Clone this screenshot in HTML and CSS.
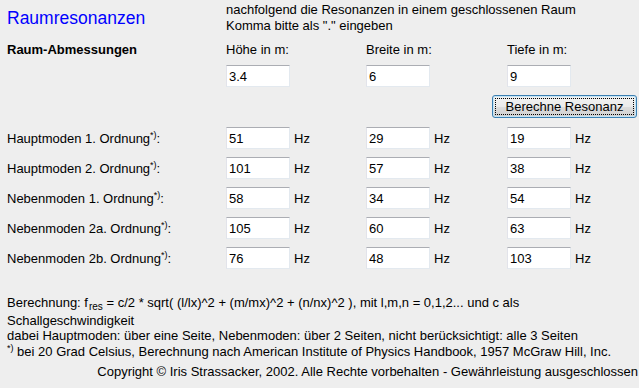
FILE: index.html
```html
<!DOCTYPE html>
<html>
<head>
    <meta charset="UTF-8">
    <title>Raumresonanzen</title>
    <link rel="stylesheet" href="styles.css">
</head>
<body>
    <div class="page">
        <div class="grid head">
            <h1 class="title">Raumresonanzen</h1>
            <p class="intro">nachfolgend die Resonanzen in einem geschlossenen Raum Komma bitte als "." eingeben</p>
        </div>
        <div class="grid labels">
            <b>Raum-Abmessungen</b>
            <span>Höhe in m:</span>
            <span>Breite in m:</span>
            <span>Tiefe in m:</span>
        </div>
        <div class="grid dims">
            <span></span>
            <input type="text" class="field" value="3.4">
            <input type="text" class="field" value="6">
            <input type="text" class="field" value="9">
        </div>
        <div class="action">
            <button class="calc">Berechne Resonanz</button>
        </div>

        <div class="grid result">
            <span>Hauptmoden 1. Ordnung<sup>*)</sup>:</span>
            <span class="cell"><input type="text" class="field" value="51"> Hz</span>
            <span class="cell"><input type="text" class="field" value="29"> Hz</span>
            <span class="cell"><input type="text" class="field" value="19"> Hz</span>
        </div>
        <div class="grid result">
            <span>Hauptmoden 2. Ordnung<sup>*)</sup>:</span>
            <span class="cell"><input type="text" class="field" value="101"> Hz</span>
            <span class="cell"><input type="text" class="field" value="57"> Hz</span>
            <span class="cell"><input type="text" class="field" value="38"> Hz</span>
        </div>
        <div class="grid result">
            <span>Nebenmoden 1. Ordnung<sup>*)</sup>:</span>
            <span class="cell"><input type="text" class="field" value="58"> Hz</span>
            <span class="cell"><input type="text" class="field" value="34"> Hz</span>
            <span class="cell"><input type="text" class="field" value="54"> Hz</span>
        </div>
        <div class="grid result">
            <span>Nebenmoden 2a. Ordnung<sup>*)</sup>:</span>
            <span class="cell"><input type="text" class="field" value="105"> Hz</span>
            <span class="cell"><input type="text" class="field" value="60"> Hz</span>
            <span class="cell"><input type="text" class="field" value="63"> Hz</span>
        </div>
        <div class="grid result">
            <span>Nebenmoden 2b. Ordnung<sup>*)</sup>:</span>
            <span class="cell"><input type="text" class="field" value="76"> Hz</span>
            <span class="cell"><input type="text" class="field" value="48"> Hz</span>
            <span class="cell"><input type="text" class="field" value="103"> Hz</span>
        </div>

        <p class="notes">
            Berechnung: f<sub>res</sub> = c/2 * sqrt( (l/lx)^2 + (m/mx)^2 + (n/nx)^2 ), mit l,m,n = 0,1,2... und c als Schallgeschwindigkeit<br>
            dabei Hauptmoden: über eine Seite, Nebenmoden: über 2 Seiten, nicht berücksichtigt: alle 3 Seiten<br>
            <sup class="mark">*)</sup> bei 20 Grad Celsius, Berechnung nach American Institute of Physics Handbook, 1957 McGraw Hill, Inc.
        </p>
        <p class="copyright">Copyright © Iris Strassacker, 2002. Alle Rechte vorbehalten - Gewährleistung ausgeschlossen</p>
    </div>
</body>
</html>
```

FILE: styles.css
```css
/* old table page, rebuilt with grid */
body {
    font-family: Arial, "Liberation Sans", sans-serif;
    font-size: 13px;
    color: #000;
    background-color: #eeeeee;
    margin: 0;
    padding: 0;
}
.page {
    padding: 2px 0 0 7px;
}
.grid {
    display: grid;
    grid-template-columns: 219px 140px 141px 1fr;
    align-items: center;
}
.head {
    height: 32px;
}
.title {
    margin: 0;
    font-size: 17.5px;
    font-weight: normal;
    color: #0000ff;
}
.intro {
    grid-column: 2 / 5;
    max-width: 372px;
    margin: 0;
    line-height: 16px;
}
.labels {
    height: 31px;
    line-height: 15px;
}
.dims {
    height: 22px;
}
.action {
    display: flex;
    justify-content: flex-end;
    height: 36px;
    padding-right: 2px;
}
.result {
    height: 30px;
}
.cell {
    display: flex;
    align-items: center;
    gap: 4px;
}
sup {
    font-size: 9px;
    line-height: 0;
}
sub {
    font-size: 10px;
    line-height: 12px;
    vertical-align: -3px;
    padding-left: 1px;
}
.notes .mark {
    line-height: normal;
}
.field {
    width: 64px;
    height: 22px;
    box-sizing: border-box;
    margin: 0;
    padding: 0 2px;
    font-family: Arial, "Liberation Sans", sans-serif;
    font-size: 13px;
    color: #000;
    background-color: #fff;
    border: 1px solid #e3e9ef;
    border-top-color: #abadb3;
    border-left-color: #e2e3ea;
    border-radius: 0;
}
.calc {
    margin-top: 8px;
    width: 145px;
    height: 23px;
    padding: 0;
    font-family: Arial, "Liberation Sans", sans-serif;
    font-size: 13px;
    color: #000;
    border: 1px solid #3c7fb1;
    border-radius: 3px;
    background: linear-gradient(#f2f2f2 0%, #ebebeb 50%, #dddddd 51%, #cfcfcf 100%);
    box-shadow: inset 0 0 0 1px #c4e5f6;
    outline: 1px dotted #000;
    outline-offset: -4px;
}
.notes {
    margin: 22px 0 0;
    padding-right: 4px;
    line-height: 15px;
}
.copyright {
    margin: 5px 0 0;
    padding-right: 1px;
    text-align: right;
}
```
